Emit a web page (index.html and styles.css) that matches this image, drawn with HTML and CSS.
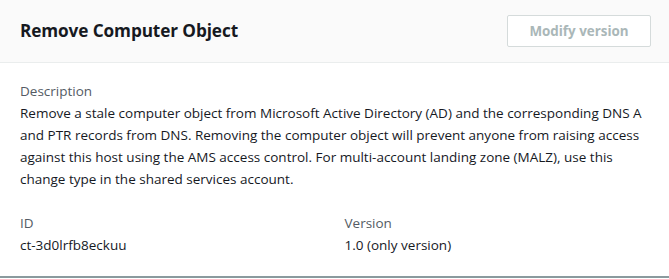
FILE: index.html
```html
<!DOCTYPE html>
<html lang="en">
<head>
<meta charset="utf-8">
<title>Remove Computer Object</title>
<link rel="stylesheet" href="styles.css">
</head>
<body>
<div class="card">
  <div class="card-header">
    <h2 class="card-title">Remove Computer Object</h2>
    <button class="btn" type="button" disabled>Modify version</button>
  </div>
  <div class="card-body">
    <div class="field">
      <div class="label">Description</div>
      <div class="value">Remove a stale computer object from Microsoft Active Directory (AD) and the corresponding DNS A and PTR records from DNS. Removing the computer object will prevent anyone from raising access against this host using the AMS access control. For multi-account landing zone (MALZ), use this change type in the shared services account.</div>
    </div>
    <div class="columns">
      <div class="field">
        <div class="label">ID</div>
        <div class="value">ct-3d0lrfb8eckuu</div>
      </div>
      <div class="field">
        <div class="label">Version</div>
        <div class="value">1.0 (only version)</div>
      </div>
    </div>
  </div>
</div>
</body>
</html>
```
FILE: styles.css
```css
html, body { margin: 0; padding: 0; background: #ffffff; }
body { font-family: "Open Sans", "Noto Sans", sans-serif; color: #16191f; }
.card {
  background: #ffffff;
  border-bottom: 2px solid #8a9a9e;
  height: 278px;
  box-sizing: border-box;
}
.card-header {
  background: #fafafa;
  border-bottom: 1px solid #eaeded;
  height: 63px;
  box-sizing: border-box;
  display: flex;
  align-items: center;
  justify-content: space-between;
  padding: 0 18px 0 20px;
}
.card-title {
  margin: 0;
  font-size: 17.2px;
  font-weight: 700;
  color: #16191f;
  letter-spacing: -0.1px;
  padding-bottom: 2px;
}
.btn {
  width: 144px;
  height: 32px;
  background: #ffffff;
  border: 1px solid #d5dbdb;
  border-radius: 2px;
  color: #aab7b8;
  font-family: "Open Sans", "Noto Sans", sans-serif;
  font-weight: 700;
  font-size: 13.4px;
  padding: 0;
}
.card-body {
  padding: 17px 20px 0 20px;
  font-size: 13.5px;
  line-height: 22px;
}
.label { color: #545b64; }
.value { color: #16191f; }
.columns {
  display: grid;
  grid-template-columns: 1fr 1fr;
  column-gap: 20px;
  margin-top: 22px;
}
```
